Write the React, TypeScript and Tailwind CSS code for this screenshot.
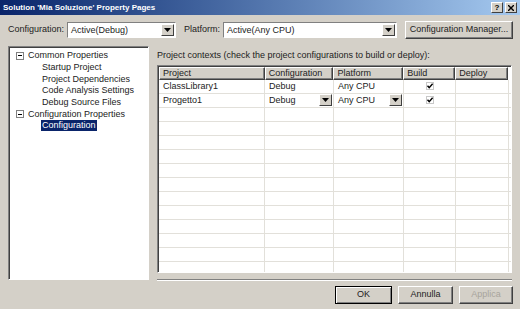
import React from "react";

const font = { fontFamily: '"Liberation Sans", Arial, sans-serif' };

function DropArrow({ className = "" }: { className?: string }) {
  return (
    <span
      className={`flex h-full w-[13px] items-center justify-center border border-t-white border-l-white border-r-[#404040] border-b-[#404040] bg-[#d4d0c8] ${className}`}
    >
      <svg width="7" height="4" viewBox="0 0 7 4" aria-hidden>
        <path d="M0 0h7L3.5 4z" fill="#000" />
      </svg>
    </span>
  );
}

function Combo({ value, width }: { value: string; width: string }) {
  return (
    <div className={`flex h-[16px] items-stretch border border-t-[#808080] border-l-[#808080] border-b-white border-r-white bg-white ${width}`}>
      <span className="flex-1 truncate pl-[3px] leading-[14px]">{value}</span>
      <span className="p-[1px]">
        <DropArrow />
      </span>
    </div>
  );
}

function WinButton({
  children,
  className = "",
  disabled = false,
  active = false,
}: {
  children: React.ReactNode;
  className?: string;
  disabled?: boolean;
  active?: boolean;
}) {
  return (
    <button
      type="button"
      className={`flex h-[18px] items-center justify-center border bg-[#d4d0c8] ${
        active
          ? "border-black shadow-[inset_1px_1px_0_#fff,inset_-1px_-1px_0_#808080]"
          : "border-t-white border-l-white border-r-[#404040] border-b-[#404040] shadow-[inset_-1px_-1px_0_#808080]"
      } ${disabled ? "text-[#a8a49c]" : "text-[#222]"} ${className}`}
    >
      {children}
    </button>
  );
}

function Check() {
  return (
    <svg width="8" height="8" viewBox="0 0 8 8" aria-hidden>
      <rect x="0.5" y="0.5" width="7" height="7" fill="#fff" stroke="#c8c8c8" />
      <path d="M1.5 3.8 3.2 5.6 6.6 1.8" fill="none" stroke="#000" strokeWidth="1.4" />
    </svg>
  );
}

const cols = ["w-[106px]", "w-[69px]", "w-[70px]", "w-[52px]", "w-[53px]"];
const headers = ["Project", "Configuration", "Platform", "Build", "Deploy"];

const tree = [
  { label: "Common Properties", level: 0 },
  { label: "Startup Project", level: 1 },
  { label: "Project Dependencies", level: 1 },
  { label: "Code Analysis Settings", level: 1 },
  { label: "Debug Source Files", level: 1 },
  { label: "Configuration Properties", level: 0 },
  { label: "Configuration", level: 1, selected: true },
];

export default function App() {
  const emptyRows = Array.from({ length: 12 });

  return (
    <div className="flex h-[309px] w-[520px] flex-col overflow-hidden bg-[#d4d0c8] text-[9px] text-[#222]" style={font}>
      {/* Title bar */}
      <div className="flex h-[15px] items-center bg-gradient-to-r from-[#0a246a] to-[#a6caf0] pl-[3px] pr-[3px]">
        <span className="flex-1 text-[8px] font-bold text-white">Solution 'Mia Soluzione' Property Pages</span>
        <span className="flex gap-[2px]">
          <span className="flex h-[11px] w-[12px] items-center justify-center border border-t-white border-l-white border-r-[#404040] border-b-[#404040] bg-[#d4d0c8] text-[8px] font-bold leading-none text-black">
            ?
          </span>
          <span className="flex h-[11px] w-[12px] items-center justify-center border border-t-white border-l-white border-r-[#404040] border-b-[#404040] bg-[#d4d0c8]">
            <svg width="6" height="6" viewBox="0 0 6 6" aria-hidden>
              <path d="M0 0 6 6M6 0 0 6" stroke="#000" strokeWidth="1.4" />
            </svg>
          </span>
        </span>
      </div>

      {/* Configuration / Platform row */}
      <div className="mt-[7px] flex h-[16px] items-center pl-[8px]">
        <span className="w-[59px]">Configuration:</span>
        <Combo value="Active(Debug)" width="w-[109px]" />
        <span className="ml-[8px] w-[39px]">Platform:</span>
        <Combo value="Active(Any CPU)" width="w-[174px]" />
        <WinButton className="ml-[8px] w-[108px]">Configuration Manager...</WinButton>
      </div>

      {/* Main area */}
      <div className="mt-[8px] flex h-[235px] pl-[8px]">
        {/* Tree */}
        <div className="h-[234px] w-[141px] border border-t-[#808080] border-l-[#808080] border-b-white border-r-white bg-white shadow-[inset_1px_1px_0_#404040]">
          <div className="pt-[3px]">
            {tree.map((t) => (
              <div key={t.label} className="flex h-[11.7px] items-center">
                {t.level === 0 ? (
                  <>
                    <span className="ml-[7px] flex h-[8px] w-[8px] items-center justify-center border border-[#808080]">
                      <span className="h-[1px] w-[4px] bg-black" />
                    </span>
                    <span className="ml-[4px]">{t.label}</span>
                  </>
                ) : (
                  <span
                    className={`ml-[32px] px-[1px] leading-[11px] ${
                      t.selected ? "bg-[#0a246a] text-white" : ""
                    }`}
                  >
                    {t.label}
                  </span>
                )}
              </div>
            ))}
          </div>
        </div>

        {/* Right panel */}
        <div className="ml-[8px] flex w-[355px] flex-col">
          <div className="mt-[3px] h-[16px]">
            Project contexts (check the project configurations to build or deploy):
          </div>
          <div className="h-[210px] overflow-hidden border border-t-[#808080] border-l-[#808080] border-b-white border-r-white bg-white shadow-[inset_1px_1px_0_#404040]">
            <div className="flex flex-col pl-[1px] pt-[1px]">
              {/* header */}
              <div className="flex h-[13px] pr-[3px]">
                {headers.map((h, i) => (
                  <div
                    key={h}
                    className={`${cols[i]} flex items-center border border-t-white border-l-white border-r-[#404040] border-b-[#404040] bg-[#d4d0c8] pl-[3px] shadow-[inset_-1px_-1px_0_#808080]`}
                  >
                    {h}
                  </div>
                ))}
                <div className="flex-1 bg-[#d4d0c8]" />
              </div>
              {/* data rows */}
              <div className="flex h-[14px] border-b border-[#e2e0da]">
                <div className={`${cols[0]} border-r border-[#e2e0da] pl-[4px] leading-[13px]`}>ClassLibrary1</div>
                <div className={`${cols[1]} border-r border-[#e2e0da] pl-[4px] leading-[13px]`}>Debug</div>
                <div className={`${cols[2]} border-r border-[#e2e0da] pl-[4px] leading-[13px]`}>Any CPU</div>
                <div className={`${cols[3]} flex items-center justify-center border-r border-[#e2e0da]`}>
                  <Check />
                </div>
                <div className={`${cols[4]} border-r border-[#e2e0da]`} />
              </div>
              <div className="flex h-[14px] border-b border-[#e2e0da]">
                <div className={`${cols[0]} border-r border-[#e2e0da] pl-[4px] leading-[13px]`}>Progetto1</div>
                <div className={`${cols[1]} flex border-r border-[#e2e0da] pl-[4px] leading-[13px]`}>
                  <span className="flex-1">Debug</span>
                  <span className="mr-[1px] h-[12px]">
                    <DropArrow />
                  </span>
                </div>
                <div className={`${cols[2]} flex border-r border-[#e2e0da] pl-[4px] leading-[13px]`}>
                  <span className="flex-1">Any CPU</span>
                  <span className="mr-[1px] h-[12px]">
                    <DropArrow />
                  </span>
                </div>
                <div className={`${cols[3]} flex items-center justify-center border-r border-[#e2e0da]`}>
                  <Check />
                </div>
                <div className={`${cols[4]} border-r border-[#e2e0da]`} />
              </div>
              {emptyRows.map((_, r) => (
                <div key={r} className="flex h-[14px] border-b border-[#e2e0da]">
                  {cols.map((c, i) => (
                    <div key={i} className={`${c} border-r border-[#e2e0da]`} />
                  ))}
                </div>
              ))}
            </div>
          </div>
          <div className="mt-[6px] h-[2px] border-t border-[#808080] border-b border-b-white" />
        </div>
      </div>

      {/* Buttons */}
      <div className="mt-[5px] flex justify-end gap-[6px] pr-[7px]">
        <WinButton active className="w-[57px]">
          OK
        </WinButton>
        <WinButton className="w-[55px]">Annulla</WinButton>
        <WinButton disabled className="w-[54px]">
          Applica
        </WinButton>
      </div>
    </div>
  );
}
